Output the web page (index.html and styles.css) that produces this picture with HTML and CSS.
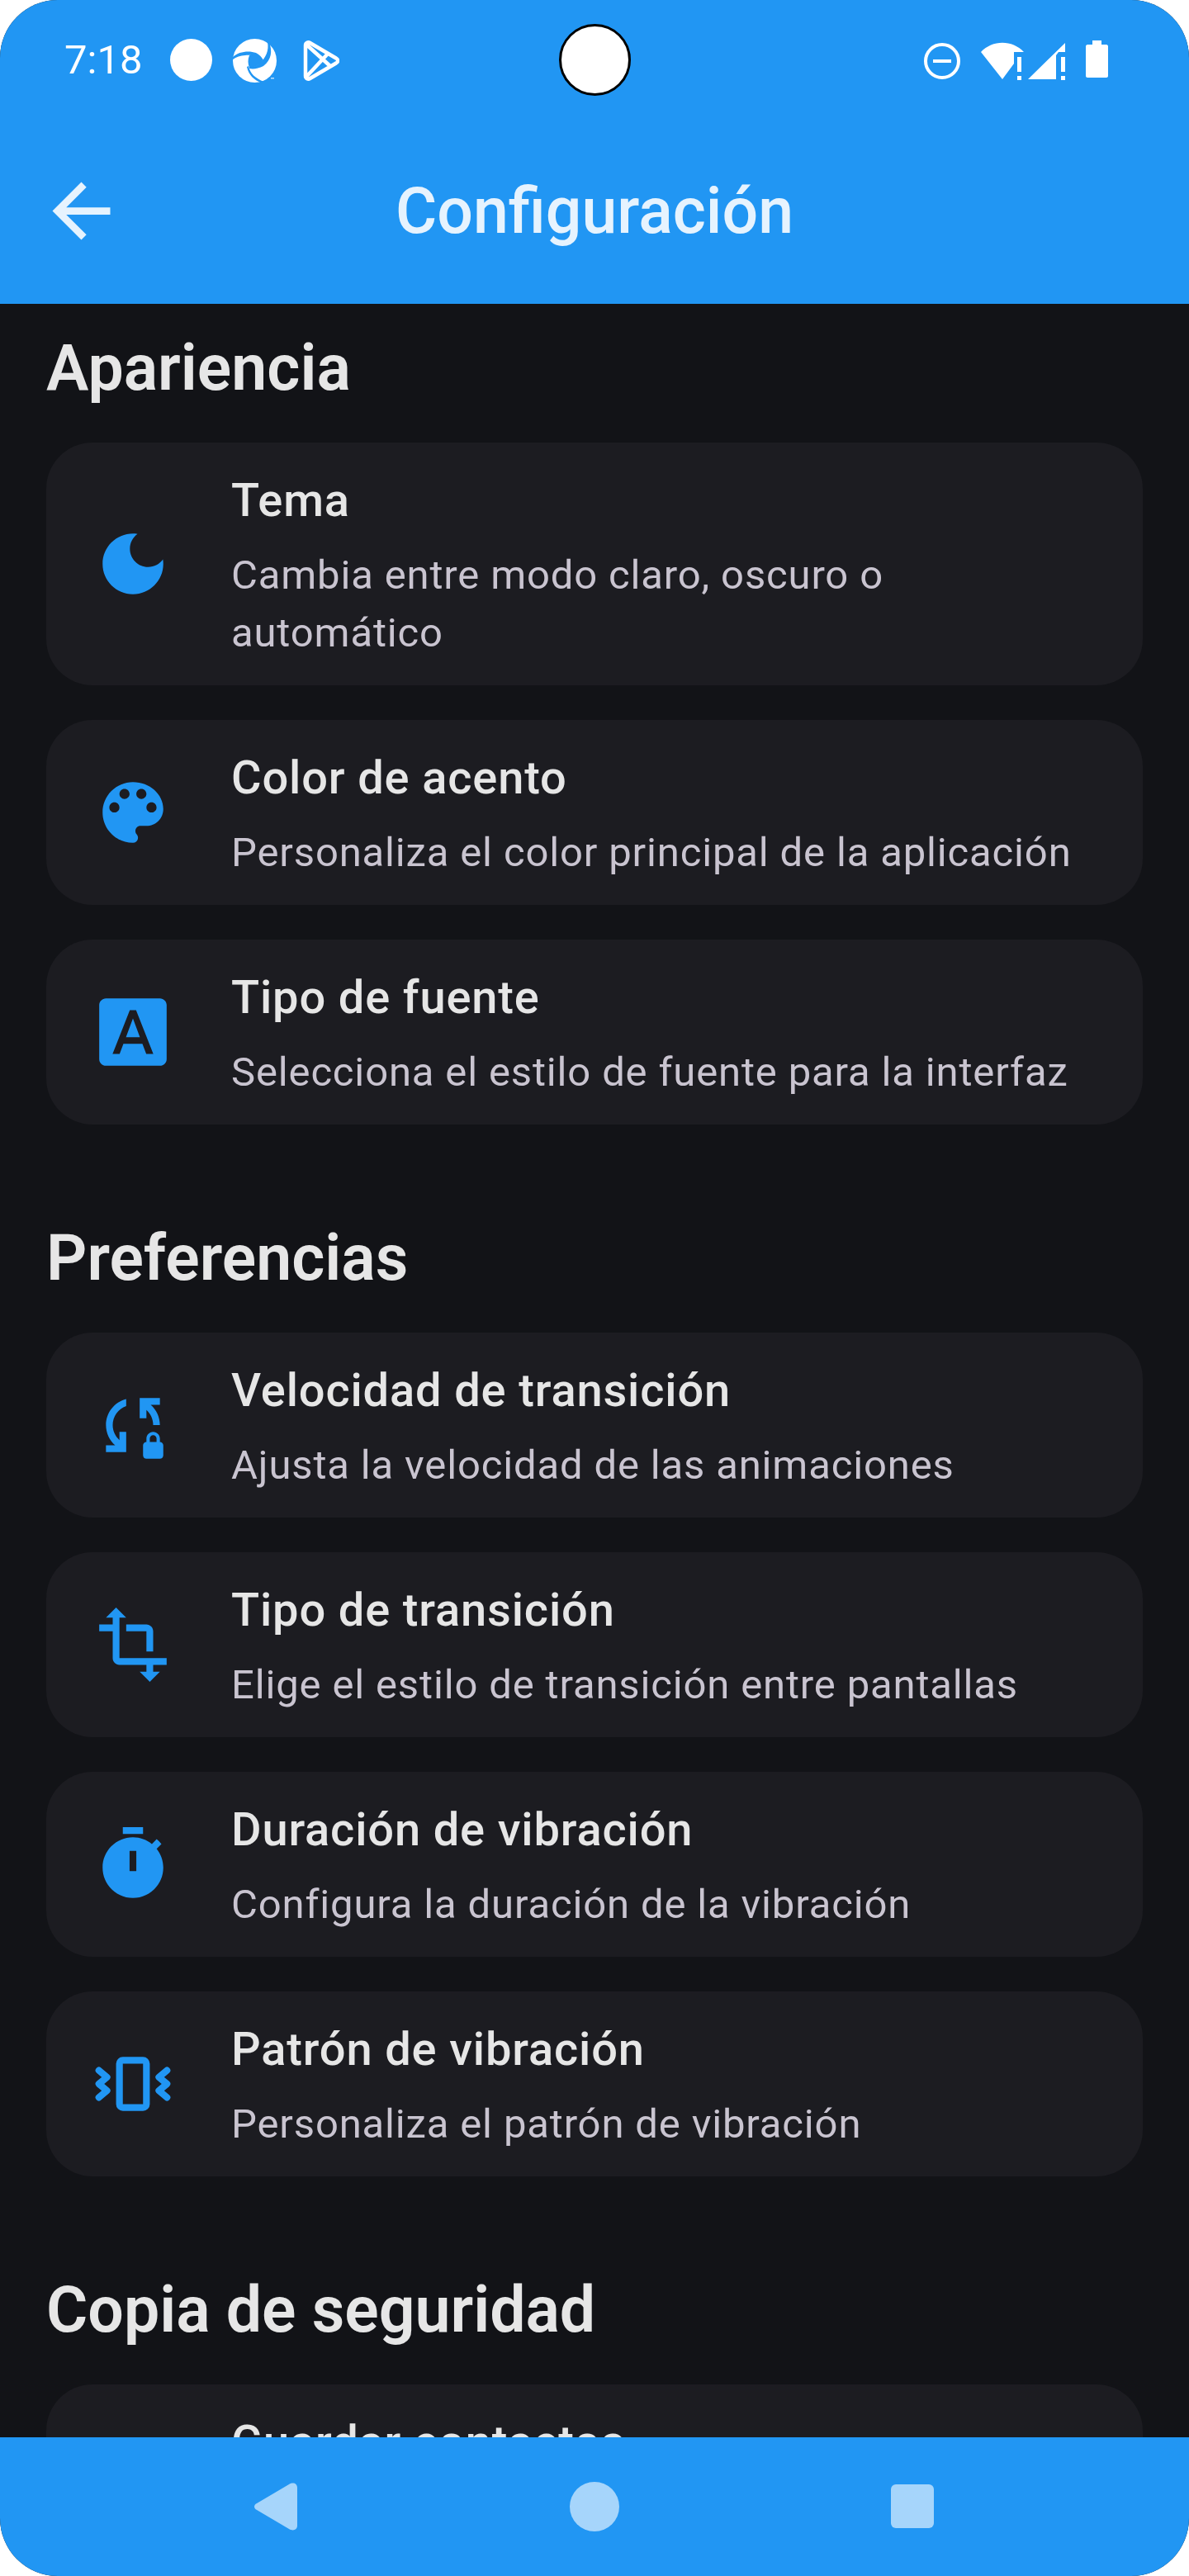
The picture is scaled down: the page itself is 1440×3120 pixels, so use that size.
FILE: index.html
```html
<!DOCTYPE html>
<html lang="es">
<head>
    <meta charset="UTF-8">
    <meta name="viewport" content="width=device-width, initial-scale=1.0">
    <title>Configuración</title>
    <link rel="stylesheet" href="styles.css">
</head>
<body>
    <div class="phone">
        <div class="status_bar">
            <div class="status_left">
                <span class="status_time">7:18</span>
                <svg class="status_dot" viewBox="0 0 51 51"><circle cx="25.5" cy="25.5" r="25.5"/></svg>
                <svg class="status_shutter" viewBox="0 0 53 53">
                    <circle class="fill_white" cx="26.5" cy="26.5" r="26.5"/>
                    <path class="fill_blue" d="M20 20C26 18 33 22 36 27C33 31 27 35 20 35C18 30 18 25 20 20Z"/>
                    <path class="fill_blue" d="M0 22C7 15 20 14 28 17C32 19 35 22 37 26L34 27C30 21 22 19 15 20C9 20.500 4 22 0 25Z"/>
                    <path class="fill_blue" d="M44 4C48 15 47 25 37 33C31 36 25 37 20 36L20 34C25 34 30 33 33 29C40 23 44 14 42 4Z"/>
                    <path class="fill_blue" d="M19 33C21 42 27 48 38 52L34 53C26 50 19 44 17 34Z"/>
                    <rect class="tm_mark" x="46" y="47" width="4" height="1.500"/>
                </svg>
                <svg class="status_play" viewBox="0 0 44 49">
                    <path class="play_line" d="M3 6C3 3 6 1.500 8.500 3L40 21.500C43 23.500 43 25.500 40 27.500L8.500 46C6 47.500 3 46 3 43ZM3 4L34 32M3 45L31 15"/>
                </svg>
            </div>
            <div class="camera"></div>
            <div class="status_right">
                <svg class="status_dnd" viewBox="0 0 44 44">
                    <circle class="dnd_ring" cx="22" cy="22" r="20"/>
                    <rect class="fill_white" x="11" y="20" width="22" height="4"/>
                </svg>
                <svg class="status_net" viewBox="0 0 104 46">
                    <path class="fill_white" d="M0 12C14 -3 38 -3 52 12H40V26L26 45Z"/>
                    <rect class="fill_white" x="44" y="18" width="5" height="18"/>
                    <rect class="fill_white" x="44" y="41" width="5" height="5"/>
                    <path class="fill_white" d="M57 45L102 1V12H94L91 16V45Z"/>
                    <rect class="fill_white" x="97" y="18" width="5" height="18"/>
                    <rect class="fill_white" x="97" y="41" width="5" height="5"/>
                </svg>
                <svg class="status_battery" viewBox="0 0 27 45">
                    <path class="fill_white" d="M8 0H19V5H25C26 5 27 6 27 7V43C27 44 26 45 25 45H2C1 45 0 44 0 43V7C0 6 1 5 2 5H8Z"/>
                </svg>
            </div>
        </div>

        <div class="app_bar">
            <svg class="back_icon" viewBox="0 0 24 24"><path d="M20 11H7.830l5.590-5.590L12 4l-8 8 8 8 1.410-1.410L7.830 13H20v-2z"/></svg>
            <div class="app_title">Configuración</div>
        </div>

        <div class="content">
            <div class="section">
                <div class="section_title">Apariencia</div>
                <div class="card_list">
                    <div class="card">
                        <svg class="card_icon" viewBox="0 0 24 24"><path d="M12 3c-4.970 0-9 4.030-9 9s4.030 9 9 9 9-4.030 9-9c0-.460-.040-.920-.100-1.360-.980 1.370-2.580 2.260-4.400 2.260-2.980 0-5.400-2.420-5.400-5.400 0-1.810.890-3.420 2.260-4.400-.440-.060-.900-.100-1.360-.100z"/></svg>
                        <div class="card_text">
                            <div class="card_title">Tema</div>
                            <div class="card_sub">Cambia entre modo claro, oscuro o automático</div>
                        </div>
                    </div>
                    <div class="card">
                        <svg class="card_icon" viewBox="0 0 24 24"><path d="M12 3c-4.970 0-9 4.030-9 9s4.030 9 9 9c.830 0 1.500-.670 1.500-1.500 0-.390-.150-.740-.390-1.010-.230-.260-.380-.610-.380-.990 0-.830.670-1.500 1.500-1.500H16c2.760 0 5-2.240 5-5 0-4.420-4.030-8-9-8zm-5.500 9c-.830 0-1.500-.670-1.500-1.500S5.670 9 6.500 9 8 9.670 8 10.500 7.330 12 6.500 12zm3-4C8.670 8 8 7.330 8 6.500S8.670 5 9.500 5s1.500.670 1.500 1.500S10.330 8 9.500 8zm5 0c-.830 0-1.500-.670-1.500-1.500S13.670 5 14.500 5s1.500.670 1.500 1.500S15.330 8 14.500 8zm3 4c-.830 0-1.500-.670-1.500-1.500S16.670 9 17.500 9s1.500.670 1.500 1.500-.670 1.500-1.500 1.500z"/></svg>
                        <div class="card_text">
                            <div class="card_title">Color de acento</div>
                            <div class="card_sub">Personaliza el color principal de la aplicación</div>
                        </div>
                    </div>
                    <div class="card">
                        <svg class="card_icon" viewBox="0 0 24 24"><path d="M9.930 13.500h4.140L12 7.980zM20 2H4c-1.100 0-2 .900-2 2v16c0 1.100.900 2 2 2h16c1.100 0 2-.900 2-2V4c0-1.100-.900-2-2-2zm-4.050 16.500l-1.140-3H9.170l-1.120 3H5.960l5.110-13h1.860l5.110 13h-2.090z"/></svg>
                        <div class="card_text">
                            <div class="card_title">Tipo de fuente</div>
                            <div class="card_sub">Selecciona el estilo de fuente para la interfaz</div>
                        </div>
                    </div>
                </div>
            </div>

            <div class="section">
                <div class="section_title">Preferencias</div>
                <div class="card_list">
                    <div class="card">
                        <svg class="card_icon" viewBox="0 0 24 24"><path d="M10 4.260v2.090C7.670 7.180 6 9.390 6 12c0 1.770.780 3.340 2 4.440V14h2v6H4v-2h2.730C5.060 16.540 4 14.400 4 12c0-3.730 2.550-6.850 6-7.740zM20 4v2h-2.730c1.660 1.460 2.730 3.600 2.730 6h-2c0-1.770-.780-3.340-2-4.440V10h-2V4h6zM20 17v-1c0-1.100-.900-2-2-2s-2 .900-2 2v1c-.550 0-1 .450-1 1v3c0 .550.450 1 1 1h4c.550 0 1-.450 1-1v-3c0-.550-.450-1-1-1zm-1 0h-2v-1c0-.550.450-1 1-1s1 .450 1 1v1z"/></svg>
                        <div class="card_text">
                            <div class="card_title">Velocidad de transición</div>
                            <div class="card_sub">Ajusta la velocidad de las animaciones</div>
                        </div>
                    </div>
                    <div class="card">
                        <svg class="card_icon" viewBox="0 0 24 24"><path d="M22 18v-2H8V4h2L7 1 4 4h2v2H2v2h4v8c0 1.100.900 2 2 2h8v2h-2l3 3 3-3h-2v-2h4zM10 8h6v6h2V8c0-1.100-.900-2-2-2h-6v2z"/></svg>
                        <div class="card_text">
                            <div class="card_title">Tipo de transición</div>
                            <div class="card_sub">Elige el estilo de transición entre pantallas</div>
                        </div>
                    </div>
                    <div class="card">
                        <svg class="card_icon" viewBox="0 0 24 24"><path fill-rule="evenodd" d="M9 1h6v2H9zM19.030 7.390l1.420-1.420c-.430-.510-.900-.990-1.410-1.410l-1.420 1.420C16.070 4.740 14.120 4 12 4c-4.970 0-9 4.030-9 9s4.020 9 9 9 9-4.030 9-9c0-2.120-.740-4.070-1.970-5.610zM11 8h2v6h-2z"/></svg>
                        <div class="card_text">
                            <div class="card_title">Duración de vibración</div>
                            <div class="card_sub">Configura la duración de la vibración</div>
                        </div>
                    </div>
                    <div class="card">
                        <svg class="card_icon" viewBox="0 0 24 24">
                            <path fill-rule="evenodd" d="M9 4h6a2 2 0 0 1 2 2v12a2 2 0 0 1-2 2H9a2 2 0 0 1-2-2V6a2 2 0 0 1 2-2zM9 6v12h6V6z"/>
                            <path class="zigzag" d="M1.900 8l2.400 2-2.400 2 2.400 2-2.400 2M22.100 8l-2.400 2 2.400 2-2.400 2 2.400 2"/>
                        </svg>
                        <div class="card_text">
                            <div class="card_title">Patrón de vibración</div>
                            <div class="card_sub">Personaliza el patrón de vibración</div>
                        </div>
                    </div>
                </div>
            </div>

            <div class="section">
                <div class="section_title">Copia de seguridad</div>
                <div class="card_list">
                    <div class="card">
                        <div class="card_icon_blank"></div>
                        <div class="card_text">
                            <div class="card_title">Guardar contactos</div>
                        </div>
                    </div>
                </div>
            </div>
        </div>

        <div class="nav_bar">
            <svg class="nav_back" viewBox="0 0 52 58"><path d="M3 25L42 2C47 -1 52 1 52 6V52C52 57 47 59 42 56L3 33C-1 31 -1 27 3 25Z"/></svg>
            <div class="nav_home"></div>
            <div class="nav_recent"></div>
        </div>
    </div>
</body>
</html>
```

FILE: styles.css
```css
* {
    margin: 0px;
    padding: 0px;
    box-sizing: border-box;
}

body {
    background-color: #ffffff;
    font-family: Roboto, "Noto Sans", sans-serif;
}

.phone {
    width: 1440px;
    height: 3120px;
    border-radius: 70px;
    overflow: hidden;
    display: flex;
    flex-direction: column;
    background-color: #121317;
    position: relative;
}

/* status bar */

.status_bar {
    height: 144px;
    background-color: #2196f3;
    display: flex;
    justify-content: space-between;
    padding: 47px 98px 0px 78px;
    flex-shrink: 0;
}

.status_left {
    display: flex;
    align-items: flex-start;
}

.status_time {
    color: #ffffff;
    font-size: 49px;
    line-height: 52px;
    width: 128px;
}

.status_dot {
    width: 51px;
    height: 51px;
    fill: #ffffff;
}

.status_shutter {
    width: 53px;
    height: 53px;
    margin-left: 25px;
    overflow: visible;
}

.fill_blue {
    fill: #2196f3;
}

.tm_mark {
    fill: #ffffff;
    opacity: 0.7;
}

.status_play {
    width: 44px;
    height: 49px;
    margin-left: 32px;
    margin-top: 2px;
}

.play_line {
    fill: none;
    stroke: #ffffff;
    stroke-width: 4.5;
    stroke-linejoin: round;
}

.camera {
    position: absolute;
    left: 677px;
    top: 29px;
    width: 87px;
    height: 87px;
    border-radius: 50%;
    background-color: #ffffff;
    border: 3px solid #000000;
}

.status_right {
    display: flex;
    align-items: flex-start;
    padding-top: 3px;
}

.fill_white {
    fill: #ffffff;
}

.status_dnd {
    width: 44px;
    height: 44px;
    margin-top: 2px;
}

.dnd_ring {
    fill: none;
    stroke: #ffffff;
    stroke-width: 4;
}

.status_net {
    width: 104px;
    height: 46px;
    margin-left: 25px;
    margin-top: 1px;
}

.status_battery {
    width: 27px;
    height: 45px;
    margin-left: 23px;
    margin-top: -1px;
}

/* app bar */

.app_bar {
    height: 224px;
    background-color: #2196f3;
    display: flex;
    align-items: center;
    justify-content: center;
    position: relative;
    flex-shrink: 0;
}

.back_icon {
    position: absolute;
    left: 46px;
    top: 59px;
    width: 105px;
    height: 105px;
    fill: #e6f3fe;
}

.app_title {
    color: #e6f3fe;
    font-size: 77px;
    font-weight: 500;
    line-height: 104px;
    text-align: center;
}

/* scrolled list */

.content {
    flex: 1;
    min-height: 0;
    overflow: hidden;
    padding: 32px 56px 0px 56px;
}

.section {
    margin-bottom: 116px;
}

.section_title {
    color: #e6e6e6;
    font-size: 77px;
    font-weight: 600;
    line-height: 92px;
    margin-bottom: 44px;
}

.card_list {
    display: flex;
    flex-direction: column;
    gap: 42px;
}

.card {
    display: flex;
    align-items: center;
    gap: 70px;
    padding: 28px 56px;
    border-radius: 56px;
    background-color: #1c1c21;
}

.card_icon {
    width: 98px;
    height: 98px;
    flex-shrink: 0;
    fill: #2196f3;
}

.card_icon_blank {
    width: 98px;
    flex-shrink: 0;
}

.zigzag {
    fill: none;
    stroke: #2196f3;
    stroke-width: 2;
    stroke-linecap: round;
    stroke-linejoin: round;
}

.card_text {
    flex: 1;
    min-width: 0;
    display: flex;
    flex-direction: column;
    gap: 14px;
}

.card_title {
    color: #e6e6e6;
    font-size: 56px;
    font-weight: 500;
    line-height: 84px;
    letter-spacing: 0.85px;
}

.card_sub {
    color: #c9c4d0;
    font-size: 49px;
    line-height: 70px;
    letter-spacing: 0.85px;
}

/* nav bar */

.nav_bar {
    height: 168px;
    background-color: #2196f3;
    flex-shrink: 0;
    position: relative;
}

.nav_back {
    position: absolute;
    left: 308px;
    top: 55px;
    width: 52px;
    height: 58px;
    fill: #a6d5fb;
}

.nav_home {
    position: absolute;
    left: 690px;
    top: 54px;
    width: 60px;
    height: 60px;
    border-radius: 50%;
    background-color: #a6d5fb;
}

.nav_recent {
    position: absolute;
    left: 1079px;
    top: 57px;
    width: 52px;
    height: 53px;
    border-radius: 6px;
    background-color: #a6d5fb;
}
```
